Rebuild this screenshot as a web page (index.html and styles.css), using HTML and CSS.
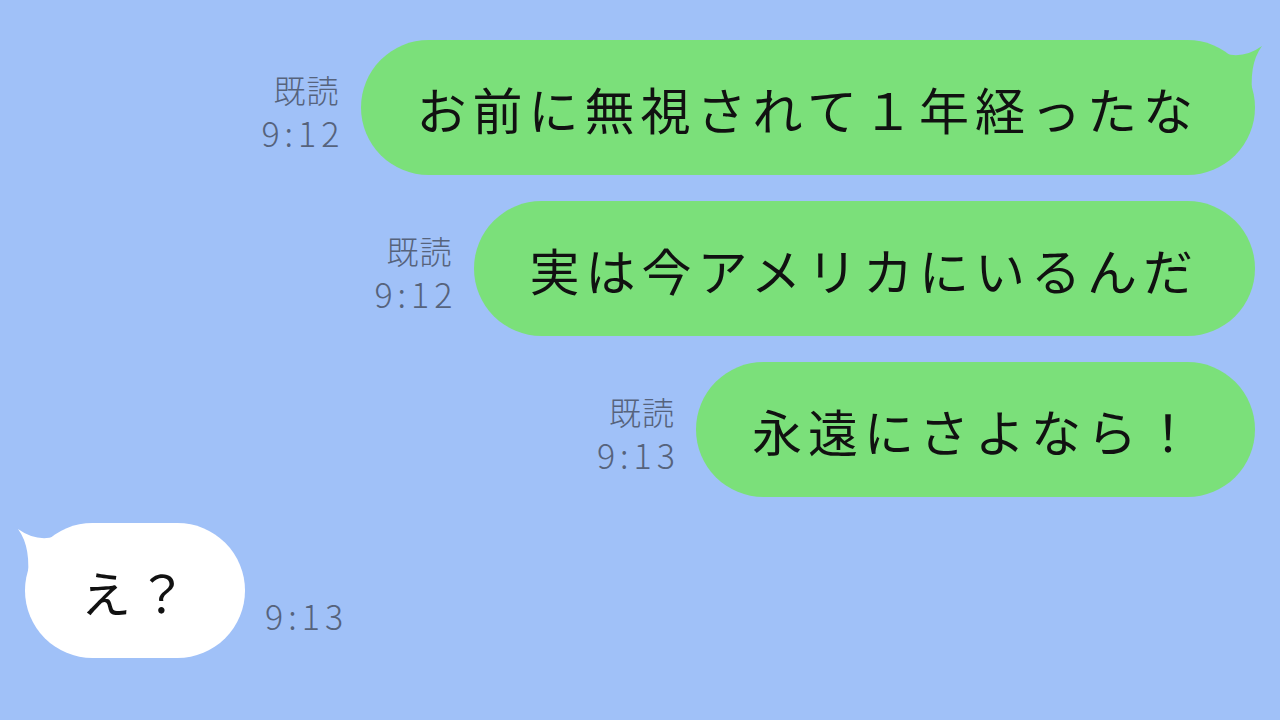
FILE: index.html
```html
<!DOCTYPE html>
<html lang="ja">
<head>
<meta charset="utf-8">
<link rel="stylesheet" href="styles.css">
</head>
<body>
<main class="chat">
  <div class="row sent">
    <div class="meta"><span class="read">既読</span><span class="time">9:12</span></div>
    <div class="bubble green">お前に無視されて１年経ったな
      <svg class="tail" viewBox="0 0 50 70" width="50" height="70"><path d="M0 10 Q25 22 47 6 Q33 25 38 60 L0 60 Z"/></svg>
    </div>
  </div>
  <div class="row sent">
    <div class="meta"><span class="read">既読</span><span class="time">9:12</span></div>
    <div class="bubble green">実は今アメリカにいるんだ</div>
  </div>
  <div class="row sent">
    <div class="meta"><span class="read">既読</span><span class="time">9:13</span></div>
    <div class="bubble green">永遠にさよなら！</div>
  </div>
  <div class="row recv">
    <div class="bubble white">え？
      <svg class="tail" viewBox="0 0 50 70" width="50" height="70"><path d="M0 10 Q25 22 47 6 Q33 25 38 60 L0 60 Z"/></svg>
    </div>
    <div class="meta"><span class="time">9:13</span></div>
  </div>
</main>
</body>
</html>
```
FILE: styles.css
```css
html, body {
  margin: 0;
  padding: 0;
}
body {
  width: 1280px;
  height: 720px;
  overflow: hidden;
  background: #a0c1f8;
  font-family: "Noto Sans CJK JP", "Noto Sans", sans-serif;
}
.chat {
  display: flex;
  flex-direction: column;
  gap: 26px;
  padding: 40px 25px 0 25px;
}
.row {
  display: flex;
  align-items: flex-end;
  gap: 21px;
}
.row.sent {
  justify-content: flex-end;
}
.row.recv {
  justify-content: flex-start;
  gap: 20px;
}
.bubble {
  position: relative;
  height: 135px;
  box-sizing: border-box;
  border-radius: 68px;
  padding: 0 56px 0 56px;
  display: flex;
  align-items: center;
  font-size: 50px;
  letter-spacing: 6px;
  color: #111;
  white-space: nowrap;
}
.bubble.green {
  background: #7be07a;
}
.bubble.white {
  background: #ffffff;
  padding: 0 52px 0 56px;
}
.bubble .tail {
  position: absolute;
  top: 0;
  right: -10px;
}
.bubble.green .tail path { fill: #7be07a; }
.bubble.white .tail {
  right: auto;
  left: -10px;
  transform: scaleX(-1);
}
.bubble.white .tail path { fill: #ffffff; }
.meta {
  display: flex;
  flex-direction: column;
  align-items: flex-end;
  color: #56637c;
  font-weight: 300;
  margin-bottom: 20px;
}
.meta .read {
  font-size: 32px;
  line-height: 44px;
  letter-spacing: 1px;
}
.meta .time {
  font-size: 34px;
  line-height: 44px;
  letter-spacing: 5px;
  margin-right: -5px;
}
.recv .meta {
  align-items: flex-start;
}
```
